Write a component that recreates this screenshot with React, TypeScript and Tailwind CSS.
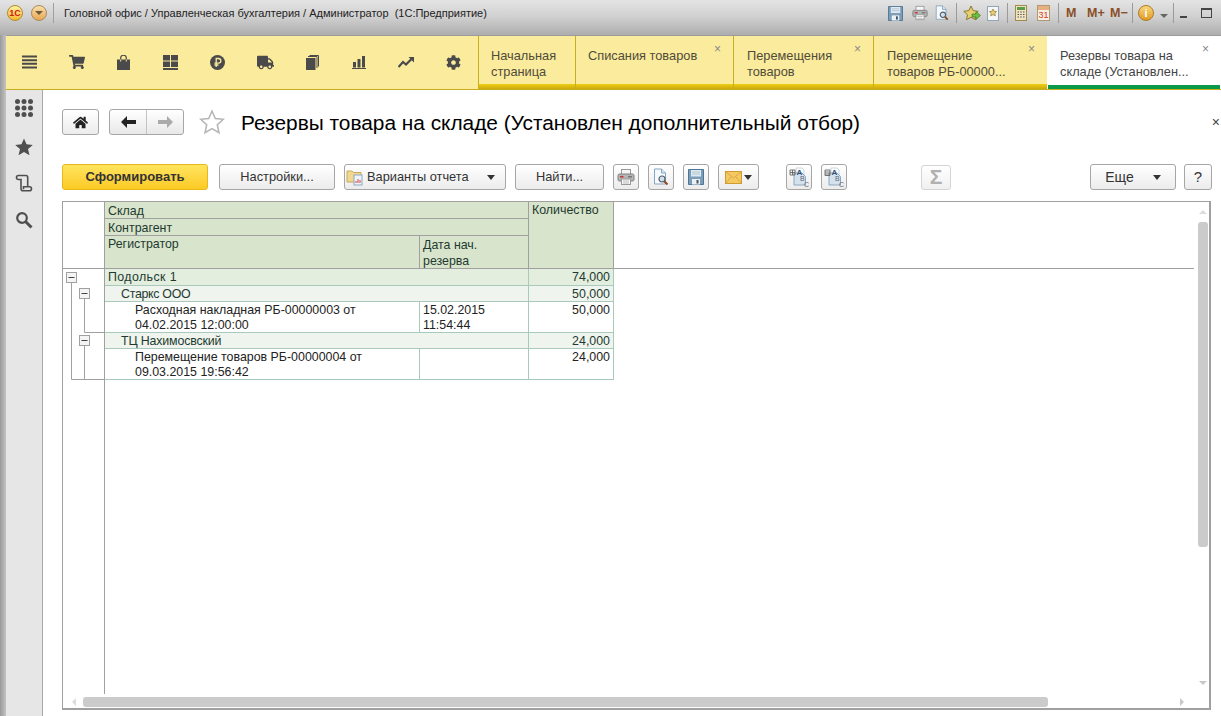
import { ReactNode } from "react";
import { FaCog, FaHome, FaShoppingCart, FaTruck } from "react-icons/fa";

function Floppy({ size = 16 }: { size?: number }) {
    return <svg width={size} height={size} viewBox="0 0 16 16">
        <path d="M.5.500h15v15H.5z" fill="#7c9db8" stroke="#4f7696" />
        <rect x="3" y="1" width="10" height="6.500" fill="#dfe9f1" />
        <path d="M4 3h8M4 5h8" stroke="#a8bccb" strokeWidth=".8" />
        <rect x="4" y="10" width="8" height="5.500" fill="#eef1f4" />
        <rect x="8.500" y="11" width="2" height="3.500" fill="#3f566a" />
    </svg>
}

function Printer({ size = 18 }: { size?: number }) {
    return <svg width={size} height={size} viewBox="0 0 18 18">
        <rect x="4.500" y="1.500" width="9" height="5" fill="#f6f6f6" stroke="#9a9a9a" />
        <rect x="1" y="6" width="16" height="7" rx="1.500" fill="#b4b4b4" stroke="#808080" />
        <rect x="3" y="8" width="3.500" height="1.500" fill="#c33" />
        <rect x="11" y="8" width="4" height="1.500" fill="#777" />
        <rect x="4.500" y="11" width="9" height="5.500" fill="#fbfbfb" stroke="#9a9a9a" />
        <path d="M6 13h6M6 15h6" stroke="#aaa" strokeWidth=".8" />
    </svg>
}

function Preview({ size = 18 }: { size?: number }) {
    return <svg width={size} height={size} viewBox="0 0 18 18">
        <path d="M2.500 1h7l4 4v11h-11z" fill="#f6fafd" stroke="#86a5c0" />
        <path d="M9.500 1v4h4" fill="#d5e4f0" stroke="#86a5c0" />
        <circle cx="10" cy="11" r="3" fill="#cfe0ee" stroke="#56606a" strokeWidth="1.200" />
        <path d="M12.300 13.300l3.200 3.200" stroke="#8a4b20" strokeWidth="2" />
    </svg>
}

function DocAbc({ mark }: { mark: "a" | "b" }) {
    return <svg width="20" height="21" viewBox="0 0 20 21">
        <path d="M7 1h6l2 2v6h-8z" fill="#fafcfd" stroke="#b4c4d2" strokeWidth=".7" />
        <path d="M5 6h8l3.500 3.500V18H5z" fill="#d3e2ef" stroke="#8da8bf" />
        {mark === "a"
            ? <path d="M1 3h5v5H1zM3.500 3v5M1 5.500h5" fill="none" stroke="#555" strokeWidth=".8" />
            : <path d="M1 3h5v5.500H1zM1 5h5M1 7h5" fill="none" stroke="#555" strokeWidth=".8" />}
        <text x="7.500" y="7.500" fontSize="8" fontWeight="700" fill="#33507a">A</text>
        <text x="11" y="14" fontSize="7" fill="#667">B</text>
        <text x="15" y="20" fontSize="7" fill="#667">C</text>
    </svg>
}

function Caret() {
    return <span className="inline-block w-0 h-0 border-x-[4px] border-x-transparent border-t-[5px] border-t-[#333]"></span>
}

function Btn({ w, children, gap = "ml-[9px]", align = "justify-center" }: { w: string, children: ReactNode, gap?: string, align?: string }) {
    return <div className={`${w} ${gap} ${align} h-[26px] shrink-0 flex items-center rounded-[3px] border border-[#a6a6a6] bg-gradient-to-b from-white to-[#ececec] text-[12.8px] text-[#333]`}>
        {children}
    </div>
}

function Sep({ gap }: { gap: string }) {
    return <div className={`w-px h-[20px] bg-[#9a9a9a] shrink-0 ${gap}`}></div>
}

function TitleBarIcons() {
    return <div className="flex items-center h-[26px] ml-auto mr-[9px]">
        <Floppy size={15} />
        <span className="ml-[9px]"><Printer size={16} /></span>
        <span className="ml-[6px]"><Preview size={16} /></span>
        <Sep gap="ml-[6px]" />
        <svg className="ml-[6px]" width="18" height="17" viewBox="0 0 18 17">
            <path d="M8 1l2.200 4.700 5 .6-3.700 3.400 1 5L8 12.300l-4.500 2.400 1-5L.8 6.300l5-.6z" fill="#e8cf70" stroke="#8a7a30" />
            <path d="M9 9h4V6.500l4.500 4-4.500 4V12H9z" fill="#6fbf3f" stroke="#3d7d22" strokeWidth=".7" />
        </svg>
        <svg className="ml-[6px]" width="12" height="15" viewBox="0 0 12 15">
            <rect x=".5" y=".5" width="11" height="14" fill="#f6f6f6" stroke="#8fa6ba" />
            <path d="M6 3l1.100 2.300 2.500.3-1.800 1.700.5 2.500L6 8.600l-2.300 1.200.5-2.500-1.800-1.700 2.500-.3z" fill="#e8cf70" stroke="#8a7a30" strokeWidth=".7" />
        </svg>
        <Sep gap="ml-[8px]" />
        <svg className="ml-[7px]" width="12" height="16" viewBox="0 0 12 16">
            <rect x=".5" y=".5" width="11" height="15" fill="#f0e4c0" stroke="#a08a50" />
            <rect x="2" y="2" width="8" height="3" fill="#5f9c4a" />
            <path d="M2.500 7h1.500M5.250 7h1.500M8 7h1.500M2.500 9.500h1.500M5.250 9.500h1.500M8 9.500h1.500M2.500 12h1.500M5.250 12h1.500M8 12h1.500" stroke="#555" strokeWidth="1.200" />
        </svg>
        <div className="ml-[10px] w-[13px] h-[16px] border border-[#b09a70] bg-[#f5f0e6] flex flex-col overflow-hidden">
            <div className="h-[4px] shrink-0 bg-[#e8b080]"></div>
            <div className="text-[9px] leading-[10px] text-center text-[#d83a1a]">31</div>
        </div>
        <Sep gap="ml-[8px]" />
        <div className="flex text-[12.5px] font-bold text-[#8a4f28] ml-[7px]">
            <span className="w-[21px]">M</span><span className="w-[23px]">M+</span><span className="w-[16px]">M−</span>
        </div>
        <Sep gap="ml-[6px]" />
        <div className="ml-[5px] w-[16px] h-[16px] rounded-full bg-gradient-to-b from-[#f8d878] to-[#e09a20] border border-[#b07a20] flex items-center justify-center text-[11px] font-bold text-white">i</div>
        <span className="ml-[6px] mt-[6px] w-0 h-0 border-x-[4px] border-x-transparent border-t-[4px] border-t-[#666]"></span>
        <Sep gap="ml-[5px]" />
        <div className="w-[7px] h-[2px] bg-[#444] mt-[8px] ml-[6px]"></div>
        <div className="w-[11px] h-[10px] border border-[#444] border-t-2 ml-[14px]"></div>
    </div>
}

function Tab({ w, title, closable = true, active = false, pl = "pl-[12px]" }: { w: string, title: ReactNode, closable?: boolean, active?: boolean, pl?: string }) {
    return <div className={`${w} shrink-0 relative flex flex-col ${active ? "bg-white" : "border-l border-[#c8ae1e]"}`}>
        <div className={`flex-1 pt-[12px] text-[12.8px] leading-[16px] ${pl} ${active ? "text-[#444]" : "text-[#504c3a]"}`}>{title}</div>
        {closable && <span className="absolute right-[12px] top-[5px] text-[12px] leading-[16px] text-[#888]">×</span>}
        <div className={active ? "h-[4px] bg-[#0a9a4a] mx-[1px]" : "h-[5px] bg-gradient-to-b from-[#f2cf14] to-[#c9a90c]"}></div>
    </div>
}

function MainBar() {
    const cls = "w-[39px] flex justify-center text-[#4a4a4a]";
    return <div className="h-[55px] flex shrink-0 bg-[#fbeb9c] border-b border-[#c8ae1e] border-t border-t-[#9c9c9c] ml-[6px]">
        <div className="w-[472px] shrink-0 flex items-center pl-[4px] pr-[5px] justify-between pb-[1px]">
            <div className={cls}>
                <svg width="15" height="14" viewBox="0 0 15 14"><path d="M0 1.500h15M0 5.200h15M0 8.800h15M0 12.500h15" stroke="currentColor" strokeWidth="2" /></svg>
            </div>
            <div className={cls}><FaShoppingCart size={16} /></div>
            <div className={cls}>
                <svg width="13" height="15" viewBox="0 0 13 15" fill="none"><path d="M0 4.500h13V15H0z" fill="currentColor" /><path d="M3.700 6.500V3a2.800 2.800 0 015.600 0v3.500" stroke="currentColor" strokeWidth="1.200" /><path d="M3.700 4.500v2M9.300 4.500v2" stroke="#fbeb9c" strokeWidth="1" /></svg>
            </div>
            <div className={cls}>
                <svg width="15" height="15" viewBox="0 0 15 15" fill="currentColor"><rect x="0" y="0" width="7" height="5.500" /><rect x="8" y="0" width="7" height="5.500" /><rect x="0" y="6.500" width="7" height="5.500" /><rect x="8" y="6.500" width="7" height="5.500" /><rect x="0" y="13" width="15" height="2" /></svg>
            </div>
            <div className={cls}>
                <svg width="15" height="15" viewBox="0 0 15 15"><circle cx="7.500" cy="7.500" r="7.500" fill="currentColor" /><path d="M6.200 12V3.500h2.300a2.200 2.200 0 010 4.700H4.500M4.500 10h4" fill="none" stroke="#fbeb9c" strokeWidth="1.300" /></svg>
            </div>
            <div className={cls}><FaTruck size={17} /></div>
            <div className={cls}>
                <svg width="13" height="15" viewBox="0 0 13 15" fill="none"><rect x="0" y="3" width="9.500" height="12" fill="currentColor" /><path d="M2 1.500h9V13M3.500.5h9v11" stroke="currentColor" /></svg>
            </div>
            <div className={cls}>
                <svg width="14" height="13" viewBox="0 0 14 13" fill="currentColor"><rect x="1" y="6" width="3" height="5.500" /><rect x="5.500" y="3" width="3" height="8.500" /><rect x="10" y="0" width="3" height="11.500" /><rect x="0" y="12" width="14" height="1" /></svg>
            </div>
            <div className={cls}>
                <svg width="16" height="11" viewBox="0 0 16 11" fill="none"><path d="M.5 10l4.500-5 3 2.500L14 1.500" stroke="currentColor" strokeWidth="2.200" /><path d="M10.500 0H16v5.500z" fill="currentColor" /></svg>
            </div>
            <div className={cls}><FaCog size={15} /></div>
        </div>
        <Tab w="w-[97px]" closable={false} title={<>Начальная<br />страница</>} />
        <Tab w="w-[158px]" title="Списания товаров" />
        <Tab w="w-[140px]" pl="pl-[13px]" title={<>Перемещения<br />товаров</>} />
        <Tab w="w-[174px]" pl="pl-[13px]" title={<>Перемещение<br />товаров РБ-00000...</>} />
        <Tab w="w-[174px]" active pl="pl-[13px]" title={<>Резервы товара на<br />складе (Установлен...</>} />
    </div>
}

function Sidebar() {
    return <div className="w-[37px] shrink-0 bg-[#e6e6e6] border-r border-[#a8a8a8] flex flex-col items-center pt-[9px] text-[#4f4f4f]">
        <svg width="18" height="18" viewBox="0 0 18 18" fill="currentColor">
            {[2.500, 9, 15.500].map(y => [2.500, 9, 15.500].map(x => <circle key={`${x}-${y}`} cx={x} cy={y} r="2.500" />))}
        </svg>
        <svg className="mt-[21px]" width="18" height="18" viewBox="0 0 18 18" fill="currentColor"><path d="M9 .5l2.500 5.800 6.300.6-4.800 4.100 1.500 6.200L9 13.900l-5.500 3.300L5 11 .2 6.900l6.300-.6z" /></svg>
        <svg className="mt-[18px]" width="18" height="18" viewBox="0 0 18 18" fill="none" stroke="currentColor" strokeWidth="1.600">
            <path d="M3.500 1.500h7.500c1.200 0 1.700 1 1.700 2v9.500M3.500 1.500a2 2 0 000 4H6v9c0 1.200.8 2.300 2 2.300h6.500a2 2 0 000-4H8.500v2.500" />
        </svg>
        <svg className="mt-[19px]" width="18" height="18" viewBox="0 0 18 18" fill="none" stroke="currentColor"><circle cx="7" cy="7" r="4.800" strokeWidth="2.200" /><path d="M10.500 10.500l6 6" strokeWidth="3" /></svg>
    </div>
}

function GroupRow({ label, qty, pl, bg }: { label: string, qty: string, pl: string, bg: string }) {
    return <div className={`flex border-b border-[#a9c9bd] ${bg} leading-[15px]`}>
        <div className={`w-[423px] shrink-0 pt-px ${pl} text-[#1e3a30]`}>{label}</div>
        <div className="w-[86px] shrink-0 pt-px border-l border-r border-[#a9c9bd] text-right pr-[3px] text-[#1e3a30]">{qty}</div>
    </div>
}

function DetailRow({ doc, date, qty }: { doc: ReactNode, date: ReactNode, qty: string }) {
    return <div className="flex border-b border-[#a9c9bd] h-[31px] leading-[15px] pt-0 text-[#222] bg-white">
        <div className="w-[314px] shrink-0 pt-px pl-[30px]">{doc}</div>
        <div className="w-[109px] shrink-0 pt-px border-l border-[#a9c9bd] pl-[3px]">{date}</div>
        <div className="w-[86px] shrink-0 pt-px border-l border-r border-[#a9c9bd] text-right pr-[3px]">{qty}</div>
    </div>
}

function Report() {
    return <div className="relative ml-[19px] mr-[10px] h-[509px] border border-[#a0a0a0] border-b-2 border-r-2 bg-white text-[12.4px] overflow-hidden">
        <div className="flex h-[67px] border-b border-[#a0a0a0] mr-[15px]">
            <div className="w-[42px] shrink-0 border-r border-[#a0a0a0]"></div>
            <div className="w-[509px] shrink-0 flex bg-[#d8e4cc] text-[#1e3a30] leading-[15px] border-r border-[#a0a0a0]">
                <div className="w-[424px] shrink-0 flex flex-col border-r border-[#a0a0a0]">
                    <div className="h-[17px] pl-[3px] pt-[2px] border-b border-[#a0a0a0]">Склад</div>
                    <div className="h-[17px] pl-[3px] pt-[2px] border-b border-[#a0a0a0]">Контрагент</div>
                    <div className="flex-1 flex">
                        <div className="w-[315px] pl-[3px] pt-px border-r border-[#a0a0a0]">Регистратор</div>
                        <div className="flex-1 pl-[3px] pt-px leading-[16px]">Дата нач.<br />резерва</div>
                    </div>
                </div>
                <div className="flex-1 pl-[3px] pt-px">Количество</div>
            </div>
        </div>
        <div className="flex h-[425px]">
            <div className="w-[42px] shrink-0 border-r border-[#a0a0a0]">
                <svg width="41" height="112" viewBox="0 0 41 112" fill="none">
                    <path d="M8.500 14V110.500H41M21.500 30V63.500H41M21.500 77V110.500" stroke="#a0a0a0" />
                    {[[3.500, 3.500], [16.500, 19.500], [16.500, 66.500]].map(([x, y]) => <g key={y}>
                        <rect x={x} y={y} width="10" height="10" fill="#f4f4f4" stroke="#a0a0a0" />
                        <path d={`M${x + 2} ${y + 5}h6`} stroke="#444" />
                    </g>)}
                </svg>
            </div>
            <div className="w-[509px] shrink-0">
                <GroupRow label="Подольск 1" qty="74,000" pl="pl-[3px] tracking-[0.4px]" bg="bg-[#e3eedf] h-[17px]" />
                <GroupRow label="Старкс ООО" qty="50,000" pl="pl-[16px] tracking-[-0.3px]" bg="bg-[#eff5ee] h-[16px]" />
                <DetailRow doc={<>Расходная накладная РБ-00000003 от<br />04.02.2015 12:00:00</>} date={<>15.02.2015<br />11:54:44</>} qty="50,000" />
                <GroupRow label="ТЦ Нахимосвский" qty="24,000" pl="pl-[16px] tracking-[-0.15px]" bg="bg-[#eff5ee] h-[16px]" />
                <DetailRow doc={<>Перемещение товаров РБ-00000004 от<br />09.03.2015 19:56:42</>} date="" qty="24,000" />
            </div>
        </div>
        {/* scrollbars */}
        <div className="absolute left-[1135px] top-[20px] w-[10px] h-[325px] rounded-[3px] bg-[#cbcbcb]"></div>
        <div className="absolute left-[1136px] top-[8px] w-0 h-0 border-x-[4px] border-x-transparent border-b-[4px] border-b-[#dcdcdc]"></div>
        <div className="absolute left-[1136px] top-[479px] w-0 h-0 border-x-[4px] border-x-transparent border-t-[4px] border-t-[#c8c8c8]"></div>
        <div className="absolute left-[20px] top-[495px] w-[965px] h-[10px] rounded-[3px] bg-[#cbcbcb]"></div>
        <div className="absolute left-[9px] top-[496px] w-0 h-0 border-y-[4px] border-y-transparent border-r-[4px] border-r-[#dcdcdc]"></div>
        <div className="absolute left-[1117px] top-[496px] w-0 h-0 border-y-[4px] border-y-transparent border-l-[4px] border-l-[#c8c8c8]"></div>
    </div>
}

export default function App() {
    return <div className="w-[1221px] h-[716px] overflow-hidden bg-white flex flex-col font-['Liberation_Sans',Arial,sans-serif]">
        <div className="h-[35px] shrink-0 flex bg-gradient-to-b from-[#e4e4e4] via-[#cfcfcf] to-[#adadad] items-start">
            <div className="flex items-center h-[26px] pl-[7px]">
                <div className="w-[16px] h-[16px] rounded-full bg-gradient-to-b from-[#fff3a0] to-[#f4b820] border border-[#b08a30] flex items-center justify-center text-[9px] leading-none font-bold text-[#d02010]">1С</div>
                <div className="ml-[8px] w-[16px] h-[16px] rounded-full bg-gradient-to-b from-[#f8dfa8] to-[#e9a650] border border-[#a88a60] flex items-center justify-center">
                    <span className="w-0 h-0 border-x-[4px] border-x-transparent border-t-[4px] border-t-[#6b5a3a]"></span>
                </div>
                <div className="w-px h-[20px] bg-[#a0a0a0] ml-[6px]"></div>
                <div className="ml-[10px] text-[11px] text-[#222] whitespace-pre">Головной офис / Управленческая бухгалтерия / Администратор  (1С:Предприятие)</div>
            </div>
            <TitleBarIcons />
        </div>
        <div className="flex-1 flex flex-col relative bg-gradient-to-r from-[#9a9a9a] to-[#c4c4c4] bg-[length:6px_100%] bg-no-repeat">
            <MainBar />
            <div className="flex-1 flex ml-[6px] min-h-0">
                <Sidebar />
                <div className="flex-1 min-w-0 flex flex-col">
                    <div className="flex items-center h-[45px] pl-[19px] pt-[19px] shrink-0">
                        <Btn w="w-[37px]" gap="ml-0"><FaHome size={15} className="text-[#222]" /></Btn>
                        <div className="ml-[10px] w-[75px] h-[26px] flex rounded-[3px] border border-[#a6a6a6] bg-gradient-to-b from-white to-[#e8e8e8]">
                            <div className="w-[37px] flex items-center justify-center border-r border-[#c4c4c4]">
                                <svg width="15" height="12" viewBox="0 0 15 12" fill="#222"><path d="M0 6l6-6v4h9v4H6v4z" /></svg>
                            </div>
                            <div className="flex-1 flex items-center justify-center">
                                <svg width="15" height="12" viewBox="0 0 15 12" fill="#aaa"><path d="M15 6L9 0v4H0v4h9v4z" /></svg>
                            </div>
                        </div>
                        <svg className="ml-[15px]" width="26" height="26" viewBox="0 0 26 26" fill="#fff" stroke="#b4b4b4" strokeWidth="1.500"><path d="M13 2l3.300 7.500 8 .8-6 5.400 1.700 8L13 19.600 6 23.700l1.700-8-6-5.400 8-.8z" /></svg>
                        <div className="ml-[16px] mt-[2px] text-[20.85px] leading-[26px] text-black whitespace-nowrap">Резервы товара на складе (Установлен дополнительный отбор)</div>
                        <div className="ml-auto mr-[1px] text-[14px] leading-none text-[#444]">×</div>
                    </div>
                    <div className="flex items-center h-[26px] mt-[29px] pl-[19px] pr-[9px] shrink-0">
                        <div className="w-[146px] h-[26px] rounded-[3px] border border-[#e8b81a] bg-gradient-to-b from-[#ffe45c] to-[#fcca20] flex items-center justify-center text-[13px] font-bold text-[#333]">Сформировать</div>
                        <Btn w="w-[116px]" gap="ml-[11px]">Настройки...</Btn>
                        <Btn w="w-[162px]" align="justify-start pl-[1px]">
                            <svg className="mr-[3px]" width="18" height="17" viewBox="0 0 18 17"><path d="M1 2h5l1.500 1.500H15V13H1z" fill="#f0d890" stroke="#c8a860" /><rect x="8" y="6" width="8" height="10" fill="#eef4fa" stroke="#8da8bf" /><path d="M10 14v-2M12 14v-4M14 14v-3" stroke="#c44" /></svg>
                            <span>Варианты отчета</span>
                            <span className="ml-[18px] flex"><Caret /></span>
                        </Btn>
                        <Btn w="w-[89px]">Найти...</Btn>
                        <Btn w="w-[26px]"><Printer /></Btn>
                        <Btn w="w-[26px]"><Preview /></Btn>
                        <Btn w="w-[26px]"><Floppy /></Btn>
                        <Btn w="w-[41px]">
                            <svg width="17" height="13" viewBox="0 0 17 13"><rect x=".5" y=".5" width="16" height="12" fill="#f6c860" stroke="#d09a30" /><path d="M1 1l7.500 6L16 1M1 12l5-6M16 12l-5-6" fill="none" stroke="#d8a848" /></svg>
                            <span className="ml-[2px] flex"><Caret /></span>
                        </Btn>
                        <Btn w="w-[26px]" gap="ml-[27px]"><DocAbc mark="a" /></Btn>
                        <Btn w="w-[26px]"><DocAbc mark="b" /></Btn>
                        <div className="ml-[74px] w-[30px] h-[25px] shrink-0 rounded-[3px] border border-[#d4d4d4] bg-gradient-to-b from-white to-[#f0f0f0] flex items-center justify-center text-[21px] font-bold text-[#b0b0b0]">Σ</div>
                        <Btn w="w-[86px]" gap="ml-auto">
                            <span className="text-[14px]">Еще</span>
                            <span className="ml-[19px] flex"><Caret /></span>
                        </Btn>
                        <Btn w="w-[28px]" gap="ml-[8px]"><span className="text-[15px]">?</span></Btn>
                    </div>
                    <div className="mt-[11px]">
                        <Report />
                    </div>
                </div>
            </div>
        </div>
    </div>
}
